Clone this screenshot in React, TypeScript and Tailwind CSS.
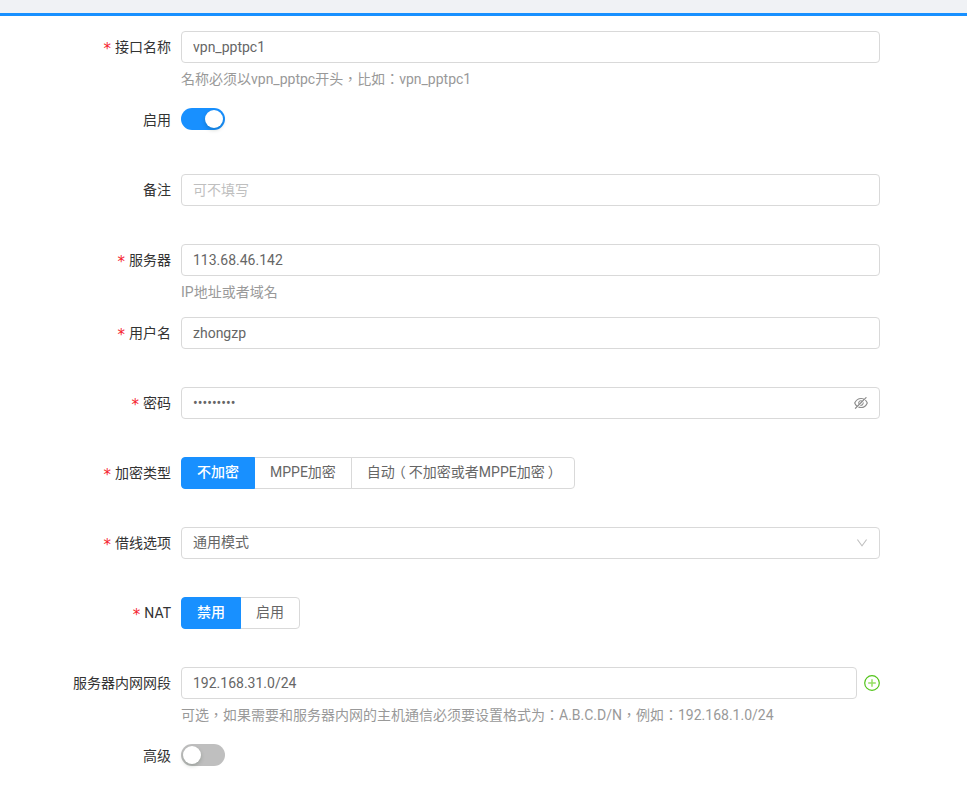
import React from 'react';

// fullwidth punctuation sits centered in the cell in the TC face, like the reference
const helpFont = "font-['Roboto','Noto_Sans_CJK_TC',sans-serif]";

const Req = () => (
	<span className="mr-1 align-[-2px] font-['DejaVu_Sans',sans-serif] text-[15px] leading-none text-[#f5222d]">*</span>
);

const Row = ({ label, required, help, children }: {
	label: string;
	required?: boolean;
	help?: string;
	children: React.ReactNode;
}) => (
	<div className={`flex items-start ${help ? 'mb-[14px]' : 'mb-[38px]'}`}>
		<label className="mr-[10px] h-8 w-[171px] text-right leading-8 text-[#333333]">
			{required && <Req />}
			{label}
		</label>
		<div className="w-[699px]">
			{children}
			{help && <div className={`mt-[6px] h-[21px] leading-[21px] text-[#999999] ${helpFont}`}>{help}</div>}
		</div>
	</div>
);

const TextInput = ({ value, placeholder, type = 'text', className = '' }: {
	value?: string;
	placeholder?: string;
	type?: string;
	className?: string;
}) => (
	<input
		readOnly
		type={type}
		value={value ?? ''}
		placeholder={placeholder}
		className={`block h-8 w-full rounded border border-[#d9d9d9] bg-white px-[11px] text-[14px] text-[#666666] outline-none placeholder:text-[#bfbfbf] ${className}`}
	/>
);

const Switch = ({ on }: { on: boolean }) => (
	<div className="h-8 pt-1">
		<div className={`flex h-[22px] w-11 items-center rounded-full px-[2px] ${on ? 'justify-end bg-[#1890ff]' : 'justify-start bg-[#bfbfbf]'}`}>
			<div className="h-[18px] w-[18px] rounded-full bg-white shadow-[0_2px_4px_rgba(0,35,11,0.2)]" />
		</div>
	</div>
);

const RadioGroup = ({ options, active }: { options: React.ReactNode[]; active: number }) => (
	<div className="flex">
		{options.map((opt, i) => (
			<div
				key={i}
				className={`h-8 whitespace-nowrap border px-[15px] leading-[28px] ${i > 0 ? '-ml-px' : ''} ${i === 0 ? 'rounded-l' : ''} ${i === options.length - 1 ? 'rounded-r' : ''} ${
					i === active ? 'z-10 border-[#1890ff] bg-[#1890ff] font-medium text-white' : 'border-[#d9d9d9] bg-white text-[#666666]'
				}`}
			>
				{opt}
			</div>
		))}
	</div>
);

const EyeInvisible = () => (
	<svg viewBox="64 64 896 896" className="h-[14px] w-[14px] fill-[#8c8c8c]">
		<path d="M942.2 486.2Q889.47 375.11 816.7 305l-50.88 50.88C807.31 395.53 843.45 447.4 874.7 512 791.5 684.2 673.4 766 512 766q-72.67 0-133.87-22.38L323 798.75Q408 838 512 838q288.3 0 430.2-300.3a60.29 60.29 0 0 0 0-51.5zm-63.57-320.64L836 122.88a8 8 0 0 0-11.32 0L715.31 232.2Q624.86 186 512 186q-288.3 0-430.2 300.3a60.3 60.3 0 0 0 0 51.5q56.69 119.4 136.5 191.41L112.48 835a8 8 0 0 0 0 11.31L155.17 889a8 8 0 0 0 11.31 0l712.15-712.12a8 8 0 0 0 0-11.32zM149.3 512C232.6 339.8 350.7 258 512 258c54.54 0 104.13 9.36 149.12 28.39l-70.3 70.3a176 176 0 0 0-238.13 238.13l-83.42 83.42C223.1 637.49 183.3 582.28 149.3 512zm246.7 0a112.11 112.11 0 0 1 146.2-106.69L401.31 546.2A112 112 0 0 1 396 512z" />
		<path d="M508 624c-3.46 0-6.87-.16-10.25-.47l-52.82 52.82a176.09 176.09 0 0 0 227.42-227.42l-52.82 52.82c.31 3.38.47 6.79.47 10.25a111.94 111.94 0 0 1-112 112z" />
	</svg>
);

const ChevronDown = () => (
	<svg viewBox="64 64 896 896" className="h-3 w-3 fill-[#bfbfbf]">
		<path d="M884 256h-75c-5.1 0-9.9 2.5-12.9 6.6L512 654.2 227.9 262.6c-3-4.1-7.8-6.6-12.9-6.6h-75c-6.5 0-10.3 7.4-6.5 12.7l352.6 486.1c12.8 17.6 39 17.6 51.7 0l352.6-486.1c3.9-5.3.1-12.7-6.4-12.7z" />
	</svg>
);

const PlusCircle = () => (
	<svg viewBox="0 0 16 16" className="h-4 w-4">
		<circle cx="8" cy="8" r="7.3" fill="#ffffff" stroke="#52c41a" strokeWidth="1.2" />
		<path d="M8 4.2v7.6M4.2 8h7.6" stroke="#95de64" strokeWidth="1.5" />
	</svg>
);

// parens nudged toward the middle of their cells
const autoOption = (
	<>
		自动
		<span className="ml-[-3px] mr-[3px]">（</span>
		不加密或者MPPE加密
		<span className="ml-[3px] mr-[-3px]">）</span>
	</>
);

export default function App() {
	return (
		<div className="h-[786px] w-[967px] overflow-hidden bg-white font-['Roboto','Noto_Sans_CJK_SC',sans-serif] text-[14px]">
			<div className="h-4 border-b-[3px] border-[#1890ff] bg-[#f0f2f5]" />
			<form className="pt-[15px]">
				<Row label="接口名称" required help="名称必须以vpn_pptpc开头，比如：vpn_pptpc1">
					<TextInput value="vpn_pptpc1" />
				</Row>
				<Row label="启用">
					<Switch on />
				</Row>
				<Row label="备注">
					<TextInput placeholder="可不填写" />
				</Row>
				<Row label="服务器" required help="IP地址或者域名">
					<TextInput value="113.68.46.142" />
				</Row>
				<Row label="用户名" required>
					<TextInput value="zhongzp" />
				</Row>
				<Row label="密码" required>
					<div className="relative">
						<TextInput type="password" value="123456789" className="pr-8" />
						<span className="absolute right-[12px] top-[9px]"><EyeInvisible /></span>
					</div>
				</Row>
				<Row label="加密类型" required>
					<RadioGroup options={['不加密', 'MPPE加密', autoOption]} active={0} />
				</Row>
				<Row label="借线选项" required>
					<div className="flex h-8 items-center justify-between rounded border border-[#d9d9d9] bg-white px-[11px] leading-[28px] text-[#666666]">
						<span className="pb-[2px]">通用模式</span>
						<ChevronDown />
					</div>
				</Row>
				<Row label="NAT" required>
					<RadioGroup options={['禁用', '启用']} active={0} />
				</Row>
				<Row label="服务器内网网段" help="可选，如果需要和服务器内网的主机通信必须要设置格式为：A.B.C.D/N，例如：192.168.1.0/24">
					<div className="flex items-center">
						<TextInput value="192.168.31.0/24" className="!w-[676px]" />
						<span className="ml-[7px]"><PlusCircle /></span>
					</div>
				</Row>
				<Row label="高级">
					<Switch on={false} />
				</Row>
			</form>
		</div>
	);
}
